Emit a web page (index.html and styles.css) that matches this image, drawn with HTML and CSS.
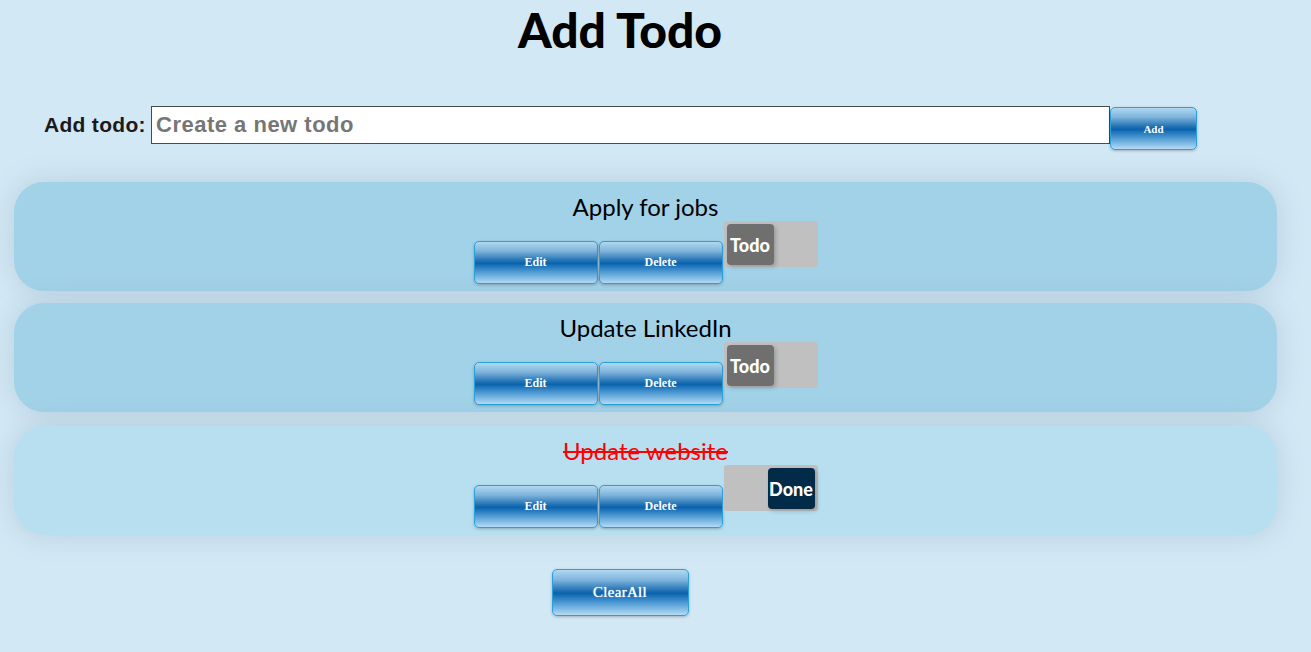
FILE: index.html
```html
<!DOCTYPE html>
<html>
<head>
<meta charset="utf-8">
<link rel="stylesheet" href="styles.css">
</head>
<body>
<h1 class="title">Add Todo</h1>
<form class="add-form">
  <label class="add-label" for="todo">Add todo:</label>
  <input class="add-input" id="todo" type="text" placeholder="Create a new todo">
  <button type="button" class="btn btn-add">Add</button>
</form>
<div class="list">
  <div class="card">
    <div class="card-text">Apply for jobs</div>
    <div class="card-row">
      <button class="btn btn-item">Edit</button>
      <button class="btn btn-item">Delete</button>
      <div class="toggle"><span class="knob">Todo</span></div>
    </div>
  </div>
  <div class="card">
    <div class="card-text">Update LinkedIn</div>
    <div class="card-row">
      <button class="btn btn-item">Edit</button>
      <button class="btn btn-item">Delete</button>
      <div class="toggle"><span class="knob">Todo</span></div>
    </div>
  </div>
  <div class="card card-done">
    <div class="card-text done-text">Update website</div>
    <div class="card-row">
      <button class="btn btn-item">Edit</button>
      <button class="btn btn-item">Delete</button>
      <div class="toggle toggle-on"><span class="knob knob-on">Done</span></div>
    </div>
  </div>
</div>
<div class="footer">
  <button class="btn btn-clear">ClearAll</button>
</div>
</body>
</html>
```
FILE: styles.css
```css
html, body {
  margin: 0;
  padding: 0;
}
body {
  background: #d3e8f5;
  font-family: "Liberation Sans", Arial, sans-serif;
  min-height: 652px;
  overflow: hidden;
}
.title {
  width: 1240px;
  margin: 0;
  padding-top: 3px;
  text-align: center;
  font-family: Lato, "Open Sans", sans-serif;
  font-weight: 900;
  font-size: 48px;
  line-height: 54px;
  letter-spacing: 0;
  color: #000;
}
.add-form {
  display: flex;
  align-items: flex-start;
  margin: 49px 0 0 44px;
  height: 76px;
}
.add-label {
  width: 107px;
  font-family: "Liberation Sans", Arial, sans-serif;
  font-weight: bold;
  font-size: 21px;
  letter-spacing: 0.3px;
  color: #1a1a1a;
  line-height: 38px;
  white-space: nowrap;
}
.add-input {
  box-sizing: border-box;
  width: 959px;
  height: 38px;
  border: 1px solid #4a4a4a;
  padding: 0 4px;
  font-family: "Liberation Sans", Arial, sans-serif;
  font-weight: bold;
  font-size: 22px;
  letter-spacing: 0.5px;
  color: #333;
  background: #fff;
  outline: none;
}
.add-input::placeholder {
  color: #767676;
}
.btn {
  box-sizing: border-box;
  border: 1px solid #2a9fd8;
  border-radius: 5px;
  background: linear-gradient(to bottom, #b0d8f2 0%, #7fb4dc 22%, #2f7bb9 42%, #0863ae 52%, #4b98d2 72%, #b3dbf5 100%);
  color: #fff;
  font-family: "Liberation Serif", "Times New Roman", serif;
  font-weight: bold;
  font-size: 12px;
  box-shadow: 0 1px 3px rgba(0, 0, 0, 0.25);
  cursor: pointer;
  padding: 0;
}
.btn-add {
  width: 87px;
  height: 43px;
  margin-top: 1px;
  font-size: 11px;
}
.list {
  display: flex;
  flex-direction: column;
  gap: 12px;
  margin: 0 34px 0 14px;
}
.card {
  background: #a2d2e8;
  border-radius: 30px;
  height: 109px;
  box-sizing: border-box;
  padding-top: 11px;
  box-shadow: 0 0 28px rgba(80, 120, 140, 0.22);
  display: flex;
  flex-direction: column;
  align-items: center;
}
.card-done {
  background: #b7dff0;
  margin-top: 2px;
}
.card-text {
  font-family: Lato, "Open Sans", sans-serif;
  font-size: 24px;
  line-height: 28px;
  color: #000;
}
.done-text {
  color: #ff0000;
  text-decoration: line-through;
}
.card-row {
  display: flex;
  align-items: flex-start;
}
.btn-item {
  width: 124px;
  height: 43px;
  margin-top: 20px;
  margin-right: 1px;
}
.toggle {
  width: 94px;
  height: 46px;
  background: #c0c0c0;
  border-radius: 3px;
  box-sizing: border-box;
  padding: 3px 0 0 3px;
  display: flex;
}
.toggle-on {
  justify-content: flex-end;
  padding: 3px 3px 0 0;
}
.knob {
  width: 47px;
  height: 41px;
  border-radius: 4px;
  background: #6f6f6f;
  color: #fff;
  font-family: Lato, "Open Sans", sans-serif;
  font-weight: 900;
  font-size: 18px;
  display: flex;
  align-items: center;
  justify-content: center;
  box-shadow: 2px 2px 4px rgba(0, 0, 0, 0.2);
}
.knob-on {
  background: #022a49;
}
.footer {
  width: 1240px;
  display: flex;
  justify-content: center;
  margin-top: 34px;
}
.btn-clear {
  width: 137px;
  height: 47px;
  font-weight: normal;
  font-size: 15px;
  letter-spacing: 0.3px;
  text-shadow: 0 0 1px #fff;
}
```
